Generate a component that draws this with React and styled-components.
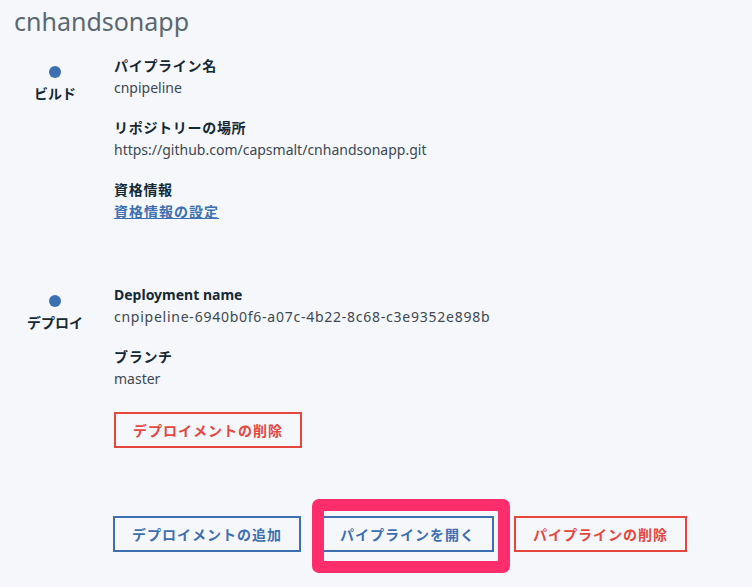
import React from "react";
import styled, { createGlobalStyle } from "styled-components";

const GlobalStyle = createGlobalStyle`
  html, body {
    margin: 0;
    padding: 0;
    background-color: #f5f7fa;
  }
  body {
    font-family: "Noto Sans", "Noto Sans CJK JP", sans-serif;
    color: #152935;
  }
`;

const Page = styled.div`
  width: 752px;
  height: 587px;
  box-sizing: border-box;
  padding: 6px 14px 0;
  overflow: hidden;
`;

const Title = styled.h1`
  margin: 0 0 20px;
  font-size: 25px;
  font-weight: 400;
  line-height: 30px;
  color: #5a6872;
`;

const Stage = styled.section`
  display: grid;
  grid-template-columns: 82px 1fr;
  column-gap: 18px;
  margin-bottom: ${(p) => p.$gap || 0}px;
`;

const StageMark = styled.div`
  display: flex;
  flex-direction: column;
  align-items: center;
  padding-top: 10px;
`;

const Dot = styled.span`
  width: 12px;
  height: 12px;
  border-radius: 50%;
  background-color: #3d70b2;
`;

const StageName = styled.span`
  margin-top: 6px;
  font-size: 14px;
  font-weight: 700;
  line-height: 20px;
  color: #152935;
`;

const Fields = styled.div`
  display: flex;
  flex-direction: column;
  gap: 20px;
`;

const Field = styled.div`
  display: flex;
  flex-direction: column;
  gap: 2px;
`;

const Label = styled.div`
  font-size: 14px;
  font-weight: 700;
  line-height: 20px;
  letter-spacing: ${(p) => (p.$latin ? "0" : "0.7px")};
  color: #152935;
`;

const Value = styled.div`
  font-size: 14px;
  line-height: 20px;
  letter-spacing: ${(p) => p.$spacing || 0}px;
  color: #3d4852;
`;

const Link = styled.a`
  font-size: 14px;
  font-weight: 700;
  line-height: 20px;
  letter-spacing: 1px;
  color: #3d70b2;
  text-decoration: underline;
  cursor: pointer;
  align-self: flex-start;
`;

const Button = styled.button`
  height: 36px;
  padding: 0 17px;
  margin-top: ${(p) => p.$offset || 0}px;
  box-sizing: border-box;
  background: transparent;
  border: 2px solid ${(p) => (p.$danger ? "#e5473e" : "#3d70b2")};
  color: ${(p) => (p.$danger ? "#e5473e" : "#3d70b2")};
  font-family: "Noto Sans", "Noto Sans CJK JP", sans-serif;
  font-size: 14px;
  font-weight: 700;
  letter-spacing: 1px;
  cursor: pointer;
  align-self: flex-start;
`;

const ButtonRow = styled.div`
  display: flex;
  gap: 20px;
  margin: 68px 0 0 99px;
`;

const Highlighted = styled.span`
  position: relative;
  display: inline-flex;
`;

const Marker = styled.span`
  position: absolute;
  left: -9px;
  top: -17px;
  width: 198px;
  height: 74px;
  box-sizing: border-box;
  border: 12px solid #ff2d6b;
  border-radius: 7px;
  pointer-events: none;
`;

export default function App() {
  return (
    <>
      <GlobalStyle />
      <Page>
        <Title>cnhandsonapp</Title>

        <Stage $gap={63}>
          <StageMark>
            <Dot />
            <StageName>ビルド</StageName>
          </StageMark>
          <Fields>
            <Field>
              <Label>パイプライン名</Label>
              <Value>cnpipeline</Value>
            </Field>
            <Field>
              <Label>リポジトリーの場所</Label>
              <Value>https://github.com/capsmalt/cnhandsonapp.git</Value>
            </Field>
            <Field>
              <Label>資格情報</Label>
              <Link>資格情報の設定</Link>
            </Field>
          </Fields>
        </Stage>

        <Stage>
          <StageMark>
            <Dot />
            <StageName>デプロイ</StageName>
          </StageMark>
          <Fields>
            <Field>
              <Label $latin>Deployment name</Label>
              <Value $spacing={0.75}>cnpipeline-6940b0f6-a07c-4b22-8c68-c3e9352e898b</Value>
            </Field>
            <Field>
              <Label>ブランチ</Label>
              <Value>master</Value>
            </Field>
            <Button $danger $offset={3}>デプロイメントの削除</Button>
          </Fields>
        </Stage>

        <ButtonRow>
          <Button>デプロイメントの追加</Button>
          <Highlighted>
            <Button>パイプラインを開く</Button>
            <Marker />
          </Highlighted>
          <Button $danger>パイプラインの削除</Button>
        </ButtonRow>
      </Page>
    </>
  );
}
